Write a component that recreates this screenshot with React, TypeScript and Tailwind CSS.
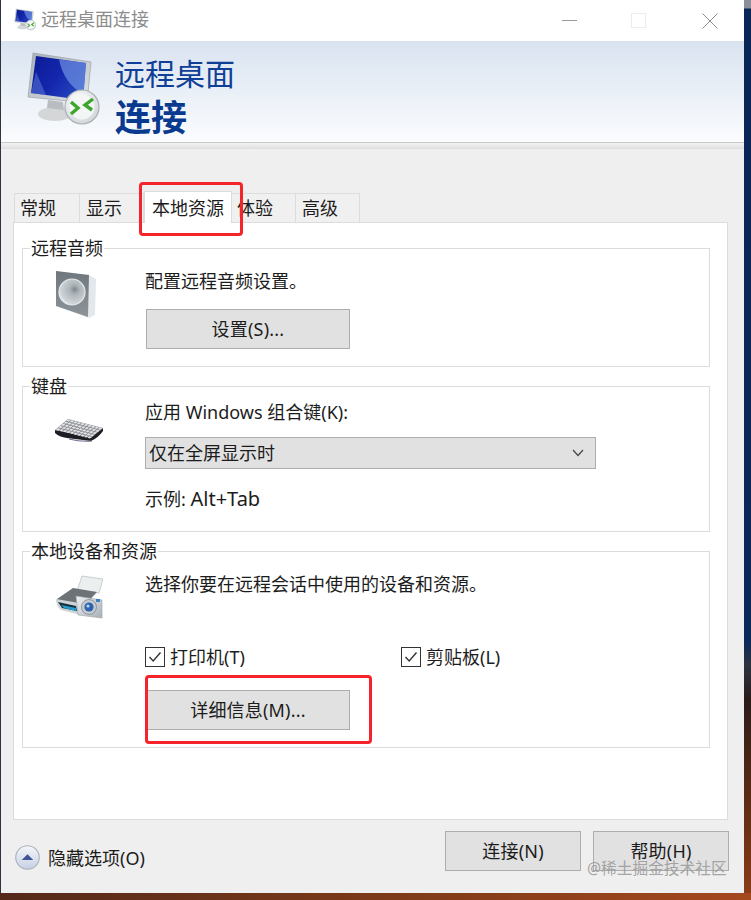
import React from 'react';

function MonitorIcon({ className }: { className: string }) {
  return (
    <svg viewBox="0 0 80 80" className={className}>
      <defs>
        <linearGradient id="mFrame" x1="0" y1="0" x2="1" y2="1">
          <stop offset="0" stopColor="#a9b0b8" />
          <stop offset="1" stopColor="#dfe3e6" />
        </linearGradient>
        <linearGradient id="mScreen" x1="0" y1="0" x2="1" y2="0.6">
          <stop offset="0" stopColor="#0a1a96" />
          <stop offset="0.55" stopColor="#1426ac" />
          <stop offset="1" stopColor="#2447c0" />
        </linearGradient>
        <radialGradient id="mBadge" cx="0.4" cy="0.35" r="0.8">
          <stop offset="0" stopColor="#ffffff" />
          <stop offset="1" stopColor="#c9cfd2" />
        </radialGradient>
      </defs>
      <ellipse cx="29" cy="64" rx="17" ry="7" fill="#d4d6d8" />
      <path d="M22 50 L37 52 L38 60 L21 58 Z" fill="#b9bdc1" />
      <path d="M7 3 L65 12 L61 53 L2 47 Z" fill="url(#mFrame)" stroke="#8f979e" strokeWidth="0.6" />
      <path d="M10 6 L60 13 L57 50 L5 43 Z" fill="url(#mScreen)" />
      <path d="M33 9.5 L60 13 L57.5 44 Q38 34 33 9.5 Z" fill="#6f92e2" opacity="0.7" />
      <path d="M5 43 L10 22 L20 45 Z" fill="#5b78d6" opacity="0.55" />
      <circle cx="56" cy="57" r="17" fill="url(#mBadge)" stroke="#aab0b4" strokeWidth="1.2" />
      <circle cx="56" cy="57" r="12.5" fill="#f4f6f5" />
      <path d="M45 52 L52 58 L45 64" fill="none" stroke="#3fa62c" strokeWidth="3.4" />
      <path d="M67 49 L59 55 L66 60" fill="none" stroke="#3fa62c" strokeWidth="3.4" />
    </svg>
  );
}

function SpeakerIcon() {
  return (
    <svg viewBox="0 0 40 48" className="h-[48px] w-[40px]">
      <defs>
        <linearGradient id="spBody" x1="0" y1="0" x2="0" y2="1">
          <stop offset="0" stopColor="#6f777e" />
          <stop offset="1" stopColor="#8d959b" />
        </linearGradient>
        <radialGradient id="spCone" cx="0.6" cy="0.4" r="0.65">
          <stop offset="0" stopColor="#7f888e" />
          <stop offset="0.3" stopColor="#aeb5ba" />
          <stop offset="0.85" stopColor="#cfd5d8" />
          <stop offset="1" stopColor="#f2f4f5" />
        </radialGradient>
      </defs>
      <path d="M0 1 L33 5 L40 9 L39 45 L33 48 L0 36 Z" fill="#e3e8ec" />
      <path d="M0 1 L33 5 L32 47 L0 36 Z" fill="url(#spBody)" />
      <circle cx="16" cy="22" r="13" fill="url(#spCone)" stroke="#e4e8ea" strokeWidth="1.2" />
    </svg>
  );
}

function KeyboardIcon() {
  const keys: React.ReactNode[] = [];
  for (let r = 0; r < 5; r++) {
    for (let c = 0; c < 10; c++) {
      keys.push(<rect key={`${r}-${c}`} x={c + 0.15} y={r + 0.15} width="0.72" height="0.68" fill="#e4e5e7" />);
    }
  }
  return (
    <svg viewBox="0 0 48 24" className="h-[24px] w-[48px]">
      <path d="M0 12 L0 15 Q4 19 12 20 L36 23 Q43 20 48 13 L48 10 L36 19 Z" fill="#1d1e24" />
      <path d="M0 12 L13 1 L48 10 L36 20 Z" fill="#8b8e92" />
      <g transform="matrix(3.5 0.9 -2.6 2.2 13 1)">{keys}</g>
      <path d="M14 21 Q26 24 37 23" stroke="#6e6f8c" strokeWidth="1.2" fill="none" />
    </svg>
  );
}

function PrinterIcon() {
  return (
    <svg viewBox="0 0 48 44" className="h-[44px] w-[48px]">
      <defs>
        <linearGradient id="prCam" x1="0" y1="0" x2="1" y2="1">
          <stop offset="0" stopColor="#eef1f3" />
          <stop offset="1" stopColor="#a8b0b6" />
        </linearGradient>
      </defs>
      <path d="M27 1 L48 4 L44 18 L22 16 Z" fill="#eceff0" stroke="#b8bdc0" strokeWidth="0.7" />
      <path d="M2 24 L18 13 L42 17 L30 30 L6 30 Z" fill="#6c7276" />
      <path d="M1 24 L24 28 L26 40 L6 35 Q1 31 1 24 Z" fill="#cfd4d6" />
      <path d="M3 27 L21 31 L22 36 L7 33 Z" fill="#17313f" />
      <path d="M6 30 L21 33 L21 36 L9 33 Z" fill="#23a0d0" />
      <path d="M21 21 L47 25 L47 43 L23 40 Z" fill="url(#prCam)" stroke="#9aa1a6" strokeWidth="0.6" />
      <circle cx="34" cy="32" r="7.5" fill="#c5ccd1" stroke="#808a91" strokeWidth="0.8" />
      <circle cx="34" cy="32" r="4.6" fill="#2d62ad" />
      <circle cx="33" cy="31" r="1.6" fill="#b8d6f3" />
      <rect x="41" y="24" width="4" height="3" fill="#3b7fc4" />
    </svg>
  );
}

function WinButton({ label, className }: { label: string; className: string }) {
  return (
    <button className={`flex h-[40px] items-center justify-center border border-[#adadad] bg-[#e1e1e1] text-[18px] tracking-[0.2px] text-[#1c1c1c] ${className}`}>
      {label}
    </button>
  );
}

function Group({ title, className, children }: { title: string; className: string; children: React.ReactNode }) {
  return (
    <div className={`relative border border-[#dcdcdc] ${className}`}>
      <span className="absolute -top-[12px] left-[7px] bg-white px-[1px] text-[18px] leading-[22px] text-[#1c1c1c]">{title}</span>
      {children}
    </div>
  );
}

function Check({ label, className }: { label: string; className: string }) {
  return (
    <div className={`flex items-center gap-[5px] ${className}`}>
      <span className="flex h-[20px] w-[20px] items-center justify-center border border-[#333] bg-white">
        <svg viewBox="0 0 16 16" className="h-[16px] w-[16px]">
          <path d="M2.5 8 L6.2 12 L13.5 3.5" fill="none" stroke="#333" strokeWidth="1.4" />
        </svg>
      </span>
      <span className="text-[18px] leading-[22px] text-[#1c1c1c]">{label}</span>
    </div>
  );
}

export default function App() {
  return (
    <div className="relative flex h-[900px] w-[751px] flex-col overflow-hidden font-['Noto_Sans','Noto_Sans_CJK_SC',sans-serif]">
      <div className="flex h-[893px]">
        <div className="w-[1px] bg-[#2d3340]" />
        <div className="flex w-[743px] flex-col bg-[#efefef]">
          {/* title bar */}
          <div className="flex h-[41px] items-center bg-white pl-[13px]">
            <MonitorIcon className="mb-[2px] h-[24px] w-[24px]" />
            <span className="mb-[4px] ml-[3px] text-[18px] leading-none text-[#8c8c8c]">远程桌面连接</span>
            <div className="ml-auto flex items-center">
              <div className="h-[1px] w-[15px] bg-[#9a9a9a]" />
              <div className="ml-[54px] h-[15px] w-[15px] border border-[#ececec]" />
              <svg viewBox="0 0 16 16" className="ml-[56px] mr-[26px] h-[16px] w-[16px]">
                <path d="M0.5 0.5 L15.5 15.5 M15.5 0.5 L0.5 15.5" stroke="#8f8f8f" strokeWidth="1" />
              </svg>
            </div>
          </div>

          {/* banner */}
          <div className="flex h-[101px] items-start bg-gradient-to-b from-[#d9e3f0] to-[#fbfcfe] pl-[25px]">
            <MonitorIcon className="mt-[9px] h-[80px] w-[80px]" />
            <div className="ml-[9px] pt-[14px]">
              <div className="text-[30px] leading-[38px] text-[#0f3f96]">远程桌面</div>
              <div className="mt-[3px] text-[36px] font-bold leading-[44px] text-[#0a3a8f]">连接</div>
            </div>
          </div>
          <div className="h-[7px] border-t border-[#c9c9c9] bg-gradient-to-b from-[#f2f2f2] to-[#dedede]" />

          {/* tabs */}
          <div className="mt-[42px] flex h-[31px] items-end pl-[13px] text-[18px] leading-none text-[#1c1c1c]">
            <div className="flex h-[29px] w-[66px] items-center border border-b-0 border-[#dcdcdc] bg-[#f0f0f0] pl-[5px]">常规</div>
            <div className="flex h-[29px] w-[64px] items-center border border-l-0 border-b-0 border-[#dcdcdc] bg-[#f0f0f0] pl-[6px]">显示</div>
            <div className="z-10 -mb-px flex h-[32px] w-[88px] items-center border border-b-0 border-[#dcdcdc] bg-white pl-[7px]">本地资源</div>
            <div className="flex h-[29px] w-[64px] items-center border-t border-r border-[#dcdcdc] bg-[#f0f0f0] pl-[5px]">体验</div>
            <div className="flex h-[29px] w-[64px] items-center border-t border-r border-[#dcdcdc] bg-[#f0f0f0] pl-[6px]">高级</div>
          </div>

          {/* tab panel */}
          <div className="ml-[12px] flex h-[598px] w-[715px] flex-col gap-[19px] border border-[#dcdcdc] bg-white px-[8px] pt-[25px]">
            <Group title="远程音频" className="h-[119px] w-[688px]">
              <div className="flex">
                <div className="w-[122px] pl-[33px] pt-[21px]"><SpeakerIcon /></div>
                <div className="flex flex-col items-start pt-[20px]">
                  <span className="text-[18px] leading-[24px] text-[#1c1c1c]">配置远程音频设置。</span>
                  <WinButton label="设置(S)..." className="ml-px mt-[16px] w-[204px]" />
                </div>
              </div>
            </Group>

            <Group title="键盘" className="h-[146px] w-[688px]">
              <div className="flex">
                <div className="w-[122px] pl-[32px] pt-[31px]"><KeyboardIcon /></div>
                <div className="flex flex-col items-start pt-[13px]">
                  <span className="text-[18px] leading-[24px] text-[#1c1c1c]">应用 Windows 组合键(K):</span>
                  <div className="mt-[13px] flex h-[32px] w-[451px] items-center justify-between border border-[#adadad] bg-[#e1e1e1] pl-[3px] pr-[11px] text-[18px] text-[#1c1c1c]">
                    仅在全屏显示时
                    <svg viewBox="0 0 12 8" className="h-[8px] w-[12px]">
                      <path d="M1 1 L6 6.5 L11 1" fill="none" stroke="#444" strokeWidth="1.2" />
                    </svg>
                  </div>
                  <span className="mt-[18px] text-[18px] leading-[24px] text-[#1c1c1c]">示例: <span className="text-[20px]">Alt+Tab</span></span>
                </div>
              </div>
            </Group>

            <Group title="本地设备和资源" className="h-[197px] w-[688px]">
              <div className="flex">
                <div className="w-[122px] pl-[32px] pt-[23px]"><PrinterIcon /></div>
                <div className="flex flex-col items-start pt-[20px]">
                  <span className="text-[18px] leading-[24px] text-[#1c1c1c]">选择你要在远程会话中使用的设备和资源。</span>
                  <div className="mt-[50px] flex">
                    <Check label="打印机(T)" className="w-[256px]" />
                    <Check label="剪贴板(L)" className="w-[140px]" />
                  </div>
                  <WinButton label="详细信息(M)..." className="ml-px mt-[22px] w-[204px]" />
                </div>
              </div>
            </Group>
          </div>

          {/* footer */}
          <div className="flex flex-1 items-start pl-[14px] pr-[15px] pt-[11px]">
            <div className="mt-[14px] flex items-center">
              <svg viewBox="0 0 24 24" className="h-[25px] w-[25px]">
                <defs>
                  <linearGradient id="upBtn" x1="0" y1="0" x2="0" y2="1">
                    <stop offset="0" stopColor="#f4f6fa" />
                    <stop offset="1" stopColor="#c6d0e4" />
                  </linearGradient>
                </defs>
                <circle cx="12" cy="12" r="11.3" fill="url(#upBtn)" stroke="#a9afb9" strokeWidth="1" />
                <path d="M6.5 14.5 L12 8.8 L17.5 14.5 Z" fill="#3f5596" />
              </svg>
              <span className="ml-[8px] text-[18px] leading-none text-[#1c1c1c]">隐藏选项(O)</span>
            </div>
            <WinButton label="连接(N)" className="ml-auto w-[136px]" />
            <WinButton label="帮助(H)" className="ml-[12px] w-[136px]" />
          </div>
        </div>
        <div className="w-[7px] bg-[linear-gradient(to_bottom,#8a8f99_0,#8a8f99_8px,#0a2656_9px,#0a2858_640px,#2c3340_665px,#2a1c1a_700px,#5c2c14_800px,#8a3c18_893px)]" />
      </div>
      <div className="h-[7px] bg-gradient-to-r from-[#54291a] via-[#7c3a18] to-[#a5481e]" />

      {/* annotations over the screenshot */}
      <div className="absolute left-[139px] top-[182px] z-20 h-[54px] w-[104px] rounded-[4px] border-[3px] border-[#f5232a]" />
      <div className="absolute left-[145px] top-[675px] z-20 h-[69px] w-[227px] rounded-[4px] border-[3px] border-[#f5232a]" />
      <span className="absolute left-[587px] top-[857px] z-20 text-[15.7px] leading-[22px] text-[#9b9b9b]/90">@稀土掘金技术社区</span>
    </div>
  );
}
